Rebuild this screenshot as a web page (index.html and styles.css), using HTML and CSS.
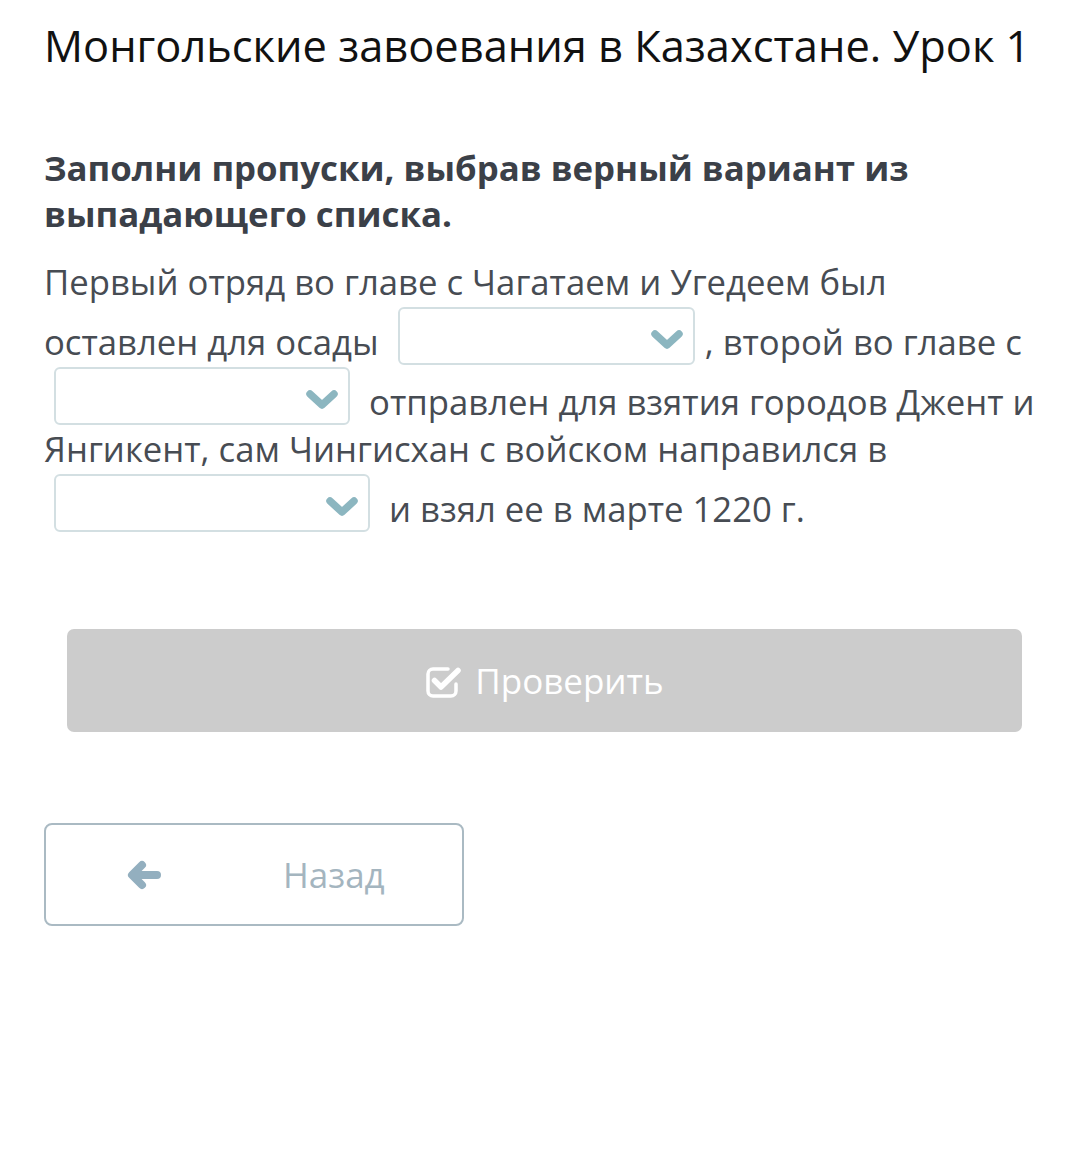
FILE: index.html
```html
<!DOCTYPE html>
<html lang="ru">
<head>
	<meta charset="utf-8">
	<title>Монгольские завоевания в Казахстане. Урок 1</title>
	<link rel="stylesheet" href="styles.css">
</head>
<body>
	<div class="page">
		<h1 class="title">Монгольские завоевания в Казахстане. Урок 1</h1>

		<h2 class="task">Заполни пропуски, выбрав верный вариант из выпадающего списка.</h2>

		<p class="text">
			Первый отряд во главе с Чагатаем и Угедеем был оставлен для осады
			<span class="dropdown dropdown-a"><svg class="chevron" width="32" height="20" viewBox="0 0 32 20"><path d="M4 4 L16 15 L28 4" /></svg></span>, второй во главе с
			<span class="dropdown dropdown-b"><svg class="chevron" width="32" height="20" viewBox="0 0 32 20"><path d="M4 4 L16 15 L28 4" /></svg></span>
			отправлен для взятия городов Джент и Янгикент, сам Чингисхан с войском направился в
			<span class="dropdown dropdown-c"><svg class="chevron" width="32" height="20" viewBox="0 0 32 20"><path d="M4 4 L16 15 L28 4" /></svg></span>
			и взял ее в марте 1220 г.
		</p>

		<div class="check-btn">
			<svg class="check-icon" width="37" height="35" viewBox="0 0 37 35">
				<path class="box" d="M23 6 H8 a5 5 0 0 0 -5 5 v17 a5 5 0 0 0 5 5 h18 a5 5 0 0 0 5 -5 v-7" />
				<path class="tick" d="M9.5 17.5 L16 24 L33 7.5" />
			</svg>
			<span>Проверить</span>
		</div>

		<div class="back-btn">
			<svg class="back-icon" width="36" height="30" viewBox="0 0 36 30">
				<path d="M31 15 H7 M16 5 L6 15 L16 25" />
			</svg>
			<span>Назад</span>
		</div>
	</div>
</body>
</html>
```

FILE: styles.css
```css
body {
	margin: 0;
	background: #ffffff;
	font-family: 'Open Sans', 'Noto Sans', sans-serif;
}

.page {
	padding: 16px 38px 60px 44px;
}

.title {
	margin: 0;
	font-size: 43.4px;
	font-weight: 400;
	line-height: 60px;
	color: #111111;
}

.task {
	margin: 69px 0 0 0;
	font-size: 34.8px;
	font-weight: 700;
	line-height: 46px;
	color: #3b4048;
}

.text {
	margin: 21px 0 0 0;
	font-size: 34.7px;
	line-height: 47px;
	color: #474c53;
}

.dropdown {
	display: inline-block;
	overflow: hidden;
	box-sizing: border-box;
	height: 58px;
	margin: 2px 10px 0 10px;
	padding-right: 10px;
	border: 2px solid #d3dfe2;
	border-radius: 6px;
	text-align: right;
	line-height: 54px;
	vertical-align: -10px;
}

.dropdown-a { width: 297px; }
.dropdown-b { width: 296px; }
.dropdown-c { width: 316px; }

.chevron {
	vertical-align: middle;
}

.chevron path {
	fill: none;
	stroke: #8cb6c0;
	stroke-width: 7.5;
	stroke-linecap: round;
	stroke-linejoin: round;
}

.check-btn {
	display: flex;
	align-items: center;
	justify-content: center;
	gap: 13px;
	height: 103px;
	margin: 97px 20px 0 23px;
	background: #cccccc;
	border-radius: 7px;
	color: #ffffff;
	font-size: 35px;
}

.check-icon path {
	fill: none;
	stroke: #ffffff;
	stroke-linecap: round;
	stroke-linejoin: round;
}

.check-icon .box {
	stroke-width: 3.5;
}

.check-icon .tick {
	stroke-width: 5.5;
}

.back-btn {
	display: flex;
	align-items: center;
	gap: 121px;
	box-sizing: border-box;
	width: 420px;
	height: 103px;
	margin-top: 91px;
	padding-left: 80px;
	border: 2px solid #aabac3;
	border-radius: 8px;
	color: #a4b5bf;
	font-size: 35px;
}

.back-icon path {
	fill: none;
	stroke: #93afbf;
	stroke-width: 8;
	stroke-linecap: round;
	stroke-linejoin: round;
}
```
